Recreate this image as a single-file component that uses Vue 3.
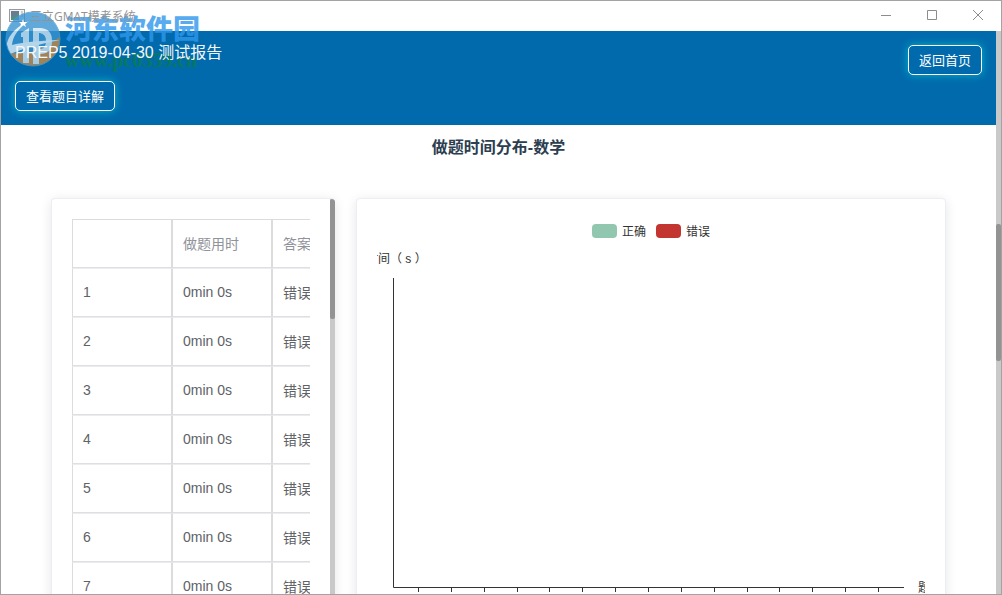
<script setup>
const rows = Array.from({ length: 10 }, (_, i) => ({ id: i + 1, time: '0min 0s', answer: '错误' }))
const ticks = Array.from({ length: 15 }, (_, i) => Math.round(41 + i * 32.86) + 0.5)
</script>

<template>
  <div class="window">
    <div class="titlebar">
      <svg class="app-icon" width="16" height="14" viewBox="0 0 16 14">
        <rect x="0.5" y="0.5" width="15" height="12" fill="#f4f4f4" stroke="#999" />
        <rect x="2" y="2" width="8" height="9" fill="#4f8f85" />
        <path d="M2 2h8v3L2 9z" fill="#667c91" />
        <path d="M12 3h2M12 5h2M12 7h2" stroke="#aaa" />
      </svg>
      <span class="app-name">三立GMAT模考系统</span>
      <div class="controls">
        <button type="button" aria-label="最小化">
          <svg width="12" height="12" viewBox="0 0 12 12"><path d="M1 5.5h10" /></svg>
        </button>
        <button type="button" aria-label="最大化">
          <svg width="12" height="12" viewBox="0 0 12 12"><path d="M1.5 0.5h9v9h-9z" /></svg>
        </button>
        <button type="button" aria-label="关闭">
          <svg width="12" height="12" viewBox="0 0 12 12"><path d="M1 0l10 10M11 0L1 10" /></svg>
        </button>
      </div>
    </div>

    <div class="viewport">
      <main class="page">
        <header class="banner">
          <div class="banner-row">
            <h1>PREP5 2019-04-30 测试报告</h1>
            <button type="button" class="glow">返回首页</button>
          </div>
          <button type="button" class="glow">查看题目详解</button>
        </header>

        <h2>做题时间分布-数学</h2>

        <div class="cards">
          <section class="card list">
            <div class="table-wrap">
              <table>
                <thead>
                  <tr><th></th><th>做题用时</th><th>答案</th></tr>
                </thead>
                <tbody>
                  <tr v-for="row in rows" :key="row.id">
                    <td>{{ row.id }}</td>
                    <td>{{ row.time }}</td>
                    <td>{{ row.answer }}</td>
                  </tr>
                </tbody>
              </table>
            </div>
            <div class="track"><div class="thumb list-thumb"></div></div>
          </section>

          <section class="card chart">
            <svg viewBox="0 0 548 420">
              <rect x="215" y="5" width="25" height="14" rx="4" fill="#91c7ae" />
              <text x="245" y="17">正确</text>
              <rect x="279" y="5" width="25" height="14" rx="4" fill="#c23531" />
              <text x="309" y="17">错误</text>
              <text x="-11" y="44">时间（ s ）</text>
              <path class="axis" d="M16.5 59V368.5H527" />
              <path v-for="x in ticks" :key="x" class="axis" :d="`M${x} 368v5`" />
              <text x="541" y="373">题号</text>
            </svg>
          </section>
        </div>
      </main>
      <div class="track"><div class="thumb page-thumb"></div></div>
    </div>

    <div class="watermark">
      <svg width="58" height="58" viewBox="0 0 58 58">
        <defs>
          <clipPath id="disc"><circle cx="28" cy="29" r="27" /></clipPath>
        </defs>
        <g clip-path="url(#disc)">
          <path d="M0 0h58v58H0z" fill="#3a94d2" />
          <path d="M4 43Q34 46 58 24V58H4z" fill="#c88a45" />
          <path d="M16 23l8-5v35h-6V27h-2zM28 18h6v36h-6z" fill="#cfe6f4" />
          <path d="M28 18h8q11 1 11 13t-10 13h-3v-5h2q5-1 5-8t-6-8h-7z" fill="#cfe6f4" />
          <path d="M1 42Q0 22 24 11Q8 22 7 35Q22 31 55 30Q24 36 5 44z" fill="#e2f1fa" />
          <path d="M18 9l1 3 3 0-2 2 1 3-3-2-3 2 1-3-2-2 3 0z" fill="#fff" />
        </g>
        <circle cx="28" cy="29" r="27" fill="none" stroke="#4c9dd2" />
      </svg>
      <div class="mark-text">
        <span class="mark-name">河东软件园</span>
        <span class="mark-site">www.pc0359.cn</span>
      </div>
    </div>
  </div>
</template>

<style>
body {
  margin: 0;
}
</style>

<style scoped>
* {
  box-sizing: border-box;
}
.window {
  position: relative;
  display: flex;
  flex-direction: column;
  height: 100vh;
  border: 1px solid #a3a3a3;
  background: #fff;
  overflow: hidden;
  font-family: "Liberation Sans", "Noto Sans CJK SC", sans-serif;
}
.titlebar {
  flex: none;
  display: flex;
  align-items: center;
  gap: 5px;
  height: 30px;
  padding-left: 8px;
}
.app-name {
  position: relative;
  z-index: 2;
  font: 12px "Open Sans", "Noto Sans CJK SC", sans-serif;
  color: #939393;
}
.controls {
  display: flex;
  margin-left: auto;
}
.controls button {
  display: grid;
  place-items: center;
  width: 46px;
  height: 30px;
  padding: 0;
  border: 0;
  background: none;
}
.controls path {
  fill: none;
  stroke: #8c8c8c;
}
.viewport {
  flex: 1;
  min-height: 0;
  display: flex;
}
.page {
  flex: 1;
  min-width: 0;
  overflow: hidden;
}
.banner {
  padding: 14px;
  background: #006aac;
}
.banner-row {
  display: flex;
  align-items: flex-start;
  justify-content: space-between;
  margin-bottom: 6px;
}
h1 {
  position: relative;
  z-index: 2;
  margin: 0;
  font-size: 16px;
  font-weight: 400;
  line-height: 16px;
  color: #f4f8fb;
}
.glow {
  display: block;
  height: 30px;
  padding: 0 10px 2px;
  border: 1px solid #fff;
  border-radius: 5px;
  background: #006aac;
  box-shadow: 0 0 8px #00b4cc;
  font-family: inherit;
  font-size: 13px;
  color: #fff;
}
h2 {
  margin: 13px 0 40px;
  font-size: 16px;
  line-height: 20px;
  text-align: center;
  color: #2c3e50;
}
.cards {
  display: grid;
  grid-template-columns: 284fr 590fr;
  gap: 21px;
  padding: 0 50px;
}
.card {
  min-width: 0;
  border: 1px solid #ebeef5;
  border-radius: 4px;
  background: #fff;
  box-shadow: 0 2px 12px rgba(0, 0, 0, 0.1);
}
.list {
  display: flex;
  border-right: 0;
  overflow: hidden;
}
.table-wrap {
  flex: 1;
  min-width: 0;
  margin: 20px;
  overflow: hidden;
}
table {
  width: 300px;
  table-layout: fixed;
  border-collapse: separate;
  border-spacing: 0;
  font-size: 14px;
  color: #606266;
}
th,
td {
  height: 49px;
  padding: 0 10px 2px;
  border: 1px solid #dcdcdc;
  border-top-color: #ececec;
  border-bottom-color: #dcdfe6;
  text-align: left;
}
th {
  border-top-color: #dcdcdc;
  font-weight: 400;
  color: #909399;
}
.track {
  flex: none;
  width: 5px;
  background: #c9c9c9;
}
.thumb {
  border-radius: 2px;
  background: #939393;
}
.list-thumb {
  height: 120px;
}
.page-thumb {
  height: 137px;
  margin-top: 193px;
}
.chart {
  padding: 20px;
}
.chart svg {
  display: block;
  width: 100%;
  overflow: hidden;
}
.chart text {
  font-size: 12px;
  fill: #333;
}
.axis {
  fill: none;
  stroke: #333;
}
.watermark {
  position: absolute;
  z-index: 1;
  top: 9px;
  left: 4px;
  display: flex;
  pointer-events: none;
  opacity: 0.8;
}
.mark-text {
  display: flex;
  flex-direction: column;
  padding-left: 2px;
}
.mark-name {
  font-size: 27px;
  font-weight: 900;
  line-height: 40px;
  color: #2f97ec;
}
.mark-site {
  font: bold 20px/20px "Liberation Serif", serif;
  color: #087d50;
}
</style>
